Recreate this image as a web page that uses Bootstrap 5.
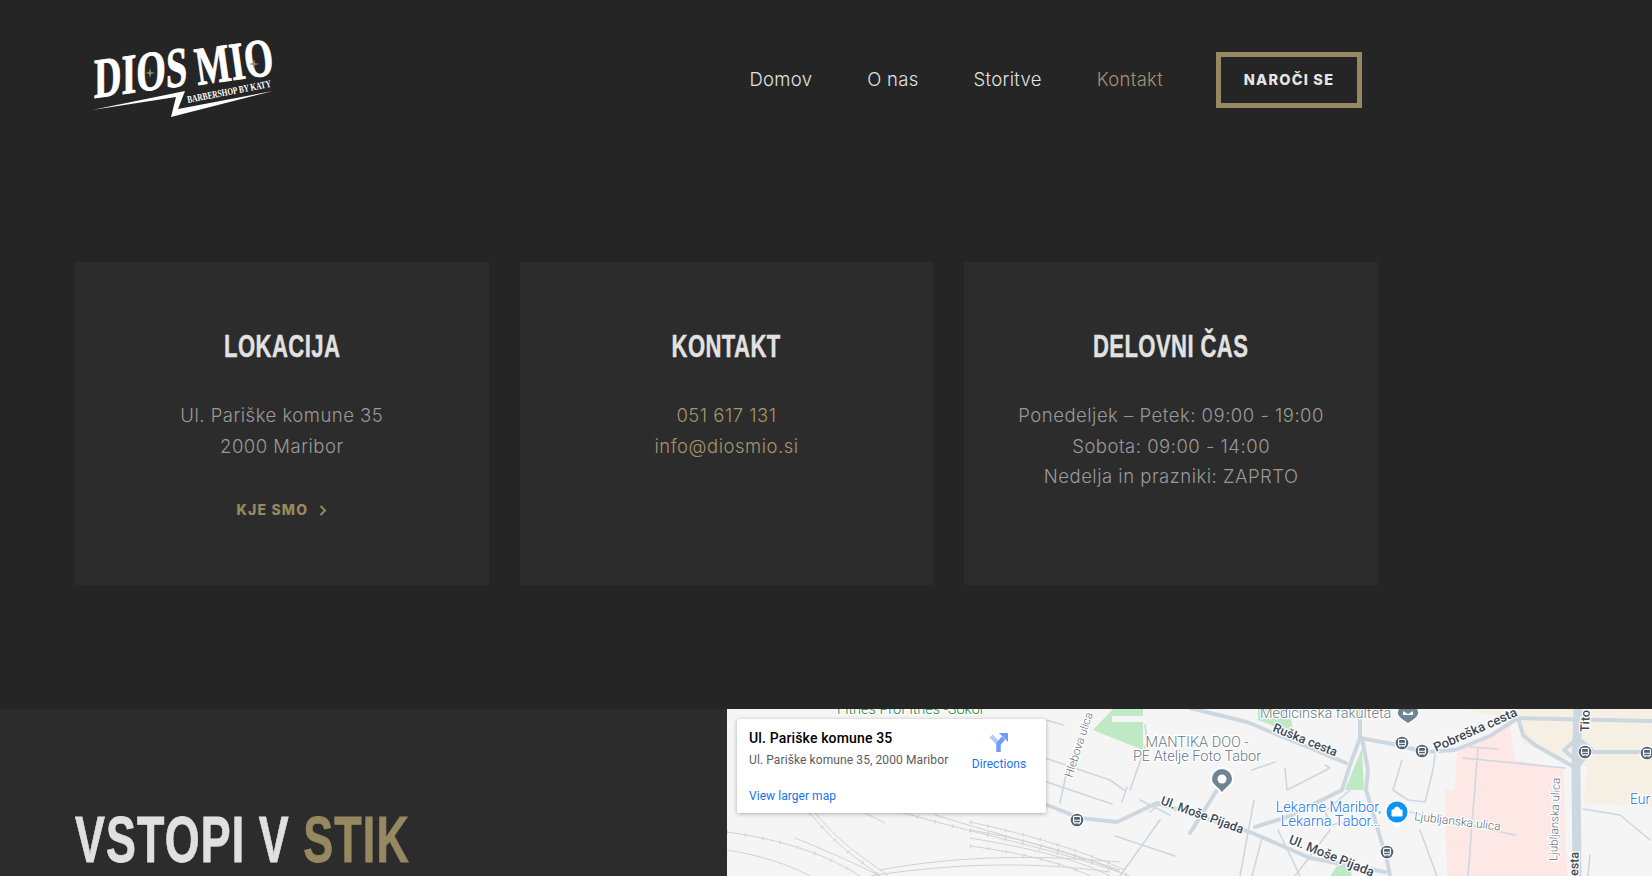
<!DOCTYPE html>
<html lang="en">
<head>
    <meta charset="UTF-8">
    <title>Diosmio Kontakt</title>
    <link href="https://cdn.jsdelivr.net/npm/bootstrap@5.3.0/dist/css/bootstrap.min.css" rel="stylesheet">
    <style>
        html, body { height: 876px; overflow: hidden; }
        body { background: #252525; font-family: "Inter", "Open Sans", sans-serif; font-weight: 300; }
        .top-bar { height: 160px; width: 1303px; margin-left: 75px; padding: 0 16px; }
        .logo-svg { display: block; width: 190px; height: 80px; overflow: visible; }
        .menu-link { color: #e2e2e2; font-size: 18.5px; letter-spacing: .3px; text-decoration: none; }
        .menu-link.active-link { color: #a3956a; }
        .menu-list { gap: 55px; margin-right: 53px; }
        .order-btn { width: 146px; height: 56px; border: 5px solid #968961; border-radius: 0; color: #e4e4e4; font-size: 14.5px; font-weight: 800; letter-spacing: 1.2px; padding: 0; }
        .cards-wrap { width: 1303px; margin: 102px 0 124px 75px; }
        .cards-wrap .row { --bs-gutter-x: 31px; }
        .info-box { height: 323px; background: #2c2c2c; padding-top: 66px; color: #999; font-size: 18.5px; line-height: 30.6px; letter-spacing: .5px; }
        .info-title { font-family: "Liberation Sans", sans-serif; font-weight: 700; font-size: 32px; line-height: 36px; color: #e2e2e2; letter-spacing: .6px; margin-bottom: 36px; -webkit-text-stroke: .4px #e2e2e2; }
        .narrow-text { display: inline-block; transform: scaleX(.69); }
        .gold-link { color: #a3956a; text-decoration: none; }
        .more-link { display: inline-flex; align-items: center; gap: 11px; margin-top: 39px; font-size: 14px; font-weight: 800; letter-spacing: 1.2px; line-height: 20px; color: #968961; }
        .join-strip { height: 167px; background: #2c2c2c; overflow: hidden; }
        .join-left { width: 727px; padding: 94px 0 0 75px; }
        .join-title { font-family: "Liberation Sans", sans-serif; font-weight: 700; font-size: 64px; line-height: 74px; letter-spacing: 1.6px; color: #e0e0e0; margin: 0; white-space: nowrap; transform: scaleX(.7); transform-origin: left center; -webkit-text-stroke: .8px #e0e0e0; }
        .join-title span { color: #968961; -webkit-text-stroke: .8px #968961; }
        .map-pane { width: 925px; height: 167px; background: #f5f5f5; overflow: hidden; }
        .map-svg { display: block; width: 925px; height: 167px; }
        .map-svg text { font-family: "Roboto", sans-serif; paint-order: stroke; stroke: #fff; stroke-width: 2.5px; stroke-linejoin: round; }
        .map-card { position: absolute; left: 10px; top: 10px; width: 309px; height: 94px; background: #fff; box-shadow: 0 1px 4px rgba(0,0,0,.3); border-radius: 2px; font-family: "Roboto", sans-serif; font-weight: 400; padding: 10px 12px; }
        .map-card-title { font-size: 14px; font-weight: 500; color: #000; line-height: 16px; margin-top: 1px; letter-spacing: .15px; }
        .map-card-addr { font-size: 12px; color: #5b5b5b; line-height: 16px; margin-top: 6px; letter-spacing: .1px; }
        .map-card-link { font-size: 12px; color: #1a73e8; line-height: 16px; text-decoration: none; letter-spacing: .05px; }
        .map-card-dir { position: absolute; left: 232px; top: 13px; width: 60px; text-align: center; }
        .map-card-dir svg { margin-bottom: 4px; }
        .map-card-big { position: absolute; left: 12px; top: 69px; }
    </style>
</head>
<body>
    <header class="top-bar d-flex align-items-center justify-content-between">
        <a href="#">
            <svg class="logo-svg" viewBox="91 40 190 80">
                <polygon fill="#fff" points="92,110 185,91 178,109 273,91 171,117 176,97"/>
                <g fill="#fff" stroke="#fff" stroke-width=".9" font-family="Liberation Serif, serif" font-weight="700">
                    <text x="0" y="0" font-size="56" textLength="94" lengthAdjust="spacingAndGlyphs" transform="translate(94 98) rotate(-8) skewX(-8)">DIOS</text>
                    <text x="0" y="0" font-size="54" textLength="78" lengthAdjust="spacingAndGlyphs" transform="translate(198 85) rotate(-8)">MIO</text>
                </g>
                <path d="M150 68l1 4 4 1-4 1-1 4-1-4-4-1 4-1zM254 59l1 4 4 1-4 1-1 4-1-4-4-1 4-1z" fill="#8a8a8a"/>
                <text x="0" y="0" fill="#fff" font-family="Liberation Serif, serif" font-size="10" font-weight="700" textLength="85" lengthAdjust="spacingAndGlyphs" transform="translate(188 103) rotate(-11)">BARBERSHOP BY KATY</text>
            </svg>
        </a>
        <div class="d-flex align-items-center">
            <nav class="nav menu-list">
                <a class="menu-link" href="#">Domov</a>
                <a class="menu-link" href="#">O nas</a>
                <a class="menu-link" href="#">Storitve</a>
                <a class="menu-link active-link" href="#">Kontakt</a>
            </nav>
            <button class="btn order-btn">NAROČI SE</button>
        </div>
    </header>

    <main class="cards-wrap">
        <div class="row">
            <div class="col-4">
                <div class="info-box text-center">
                    <h3 class="info-title"><span class="narrow-text">LOKACIJA</span></h3>
                    <div>Ul. Pariške komune 35</div>
                    <div>2000 Maribor</div>
                    <a class="gold-link more-link" href="#">KJE SMO
                        <svg width="8" height="11" viewBox="0 0 8 11"><path d="M1.500 1l4.500 4.500-4.500 4.500" fill="none" stroke="#968961" stroke-width="2"/></svg>
                    </a>
                </div>
            </div>
            <div class="col-4">
                <div class="info-box text-center">
                    <h3 class="info-title"><span class="narrow-text">KONTAKT</span></h3>
                    <div><a class="gold-link" href="#">051 617 131</a></div>
                    <div><a class="gold-link" href="#">info@diosmio.si</a></div>
                </div>
            </div>
            <div class="col-4">
                <div class="info-box text-center">
                    <h3 class="info-title"><span class="narrow-text">DELOVNI ČAS</span></h3>
                    <div>Ponedeljek – Petek: 09:00 - 19:00</div>
                    <div>Sobota: 09:00 - 14:00</div>
                    <div>Nedelja in prazniki: ZAPRTO</div>
                </div>
            </div>
        </div>
    </main>

    <section class="join-strip d-flex">
        <div class="join-left">
            <h2 class="join-title">VSTOPI V <span>STIK</span></h2>
        </div>
        <div class="map-pane position-relative">
            <svg class="map-svg" viewBox="727 709 925 167">
                <defs>
                    <g id="busPin">
                        <circle r="7.500" fill="#fff"/>
                        <circle r="6.300" fill="#4f6272"/>
                        <rect x="-3.500" y="-3.600" width="7" height="6.400" rx="1.200" fill="none" stroke="#fff" stroke-width="1.200"/>
                        <path d="M-3.400 .3h6.800M-2.200 3.200v1M2.200 3.200v1" stroke="#fff" stroke-width="1.100"/>
                    </g>
                </defs>
                <!-- land areas -->
                <polygon fill="#f6f0e4" points="1437,709 1652,709 1652,807 1583,803 1587,767 1563,757 1523,743 1518,720 1463,709"/>
                <polygon fill="#fde8e6" points="1510,725 1515,760 1563,768 1567,876 1447,876 1445,790 1455,790 1457,752"/>
                <polygon fill="#bfe8c5" points="1093,730 1113,709 1143,709 1143,750"/>
                <rect x="1112" y="716" width="31" height="6" fill="#f5f5f5"/>
                <polygon fill="#bfe8c5" points="1258,709 1290,709 1293,733 1258,720"/>
                <polygon fill="#bfe8c5" points="1362,748 1345,790 1364,790"/>
                <polygon fill="#bfe8c5" points="1330,876 1337,866 1350,866 1352,876"/>
                <!-- rail lines -->
                <g fill="none" stroke="#d2d2d2" stroke-width="1">
                    <path d="M810 813 C840 850 860 860 880 876"/>
                    <path d="M815 813 C845 848 865 858 888 876"/>
                    <path d="M727 832 C770 838 820 850 860 876"/>
                    <path d="M727 850 C760 855 790 865 810 876"/>
                    <path d="M795 838 C830 852 860 866 880 876"/>
                    <path d="M900 812 C980 835 1060 850 1130 876"/>
                    <path d="M935 815 C1000 835 1060 850 1120 870"/>
                    <path d="M970 822 C1030 835 1080 850 1125 870"/>
                    <path d="M970 830 C1030 840 1080 855 1120 872"/>
                    <path d="M970 838 C1030 848 1080 860 1110 876"/>
                    <path d="M970 846 C1030 854 1070 866 1090 876"/>
                    <path d="M880 870 C960 855 1040 855 1120 862"/>
                    <path d="M870 876 C960 862 1040 862 1110 872"/>
                    <path d="M865 813L885 823"/>
                </g>
                <g fill="none" stroke="#d2d2d2" stroke-width="4" stroke-dasharray="1 17">
                    <path d="M810 813 C840 850 860 860 880 876"/>
                    <path d="M727 832 C770 838 820 850 860 876"/>
                    <path d="M900 812 C980 835 1060 850 1130 876"/>
                    <path d="M970 822 C1030 835 1080 850 1125 870"/>
                    <path d="M970 830 C1030 840 1080 855 1120 872"/>
                    <path d="M970 846 C1030 854 1070 866 1090 876"/>
                </g>
                <!-- roads -->
                <g fill="none" stroke="#cdd7e0" stroke-linecap="round" stroke-linejoin="round">
                    <g stroke-width="1.600">
                        <path d="M1046 720L1063 725M1042 757L1110 780 1124 790M1047 782L1112 804M1127 787L1122 802M1067 770L1060 803M1145 725L1147 742 1130 790"/>
                        <path d="M1140 800L1170 815M1150 812L1168 797M1160 820L1120 876M1115 836L1175 856M1252 770L1275 762M1285 768L1287 790 1330 768 1325 765"/>
                        <path d="M1402 760L1393 790 1408 800 1425 802 1433 770 1435 755M1420 830L1437 876M1278 830L1300 876"/>
                        <path d="M1254 800L1240 876M1262 838L1252 876M1330 830L1295 876M1350 790L1325 812 1332 825 1356 818"/>
                        <path d="M1410 812L1515 835M1470 747L1498 749M1478 748L1468 876M1463 758L1565 768"/>
                        <path d="M1583 809L1620 815 1650 840M1590 855L1588 876"/>
                    </g>
                    <g stroke-width="4">
                        <path d="M1190 708L1247 722 1310 748 1346 763M1360 708V738L1350 765 1342 790 1290 816 1255 827M1362 738L1368 770 1366 790 1378 830 1387 860 1390 876"/>
                        <path d="M1360 738L1398 745 1425 752 1455 750 1490 736 1518 718 1652 721"/>
                        <path d="M1518 718L1523 735 1535 745 1576 768M1576 768L1590 752H1652M1564 750L1578 738 1592 750M1564 750L1576 760"/>
                        <path d="M1047 805L1080 818 1117 822 1157 803M1217 790L1190 833M1157 803L1185 812 1250 832 1310 858 1385 872"/>
                    </g>
                    <path stroke-width="9" d="M1578 709L1576 770 1577 876"/>
                </g>
                <!-- labels -->
                <text x="837" y="714" font-size="14.500" fill="#188038">Fitnes ProFitnes -Sokol</text>
                <text x="1260" y="718" font-size="14.500" fill="#687987">Medicinska fakulteta</text>
                <text text-anchor="middle" x="1197" y="747" font-size="14.500" fill="#687987">MANTIKA DOO -</text>
                <text text-anchor="middle" x="1197" y="761" font-size="14.500" fill="#687987">PE Atelje Foto Tabor</text>
                <text font-size="11.500" fill="#5f6d7a" transform="translate(1072 778) rotate(-72)">Hlebova ulica</text>
                <text font-size="12.500" font-weight="500" fill="#3c4a57" transform="translate(1272 731) rotate(22)">Ruška cesta</text>
                <text font-size="13" font-weight="500" fill="#3c4a57" transform="translate(1436 752) rotate(-24)">Pobreška cesta</text>
                <text font-size="12.500" font-weight="500" fill="#3c4a57" transform="translate(1160 804) rotate(20)">Ul. Moše Pijada</text>
                <text font-size="13" font-weight="500" fill="#3c4a57" transform="translate(1288 843) rotate(22)">Ul. Moše Pijada</text>
                <text font-size="12" fill="#5f6d7a" transform="translate(1414 820) rotate(7)">Ljubljanska ulica</text>
                <text font-size="11.500" fill="#5f6d7a" transform="translate(1557 861) rotate(-88)">Ljubljanska ulica</text>
                <text font-size="12.500" font-weight="500" fill="#3c4a57" transform="translate(1589 732) rotate(-88)">Tito</text>
                <text font-size="12.500" font-weight="500" fill="#3c4a57" transform="translate(1578 876) rotate(-88)">esta</text>
                <text x="1630" y="804" font-size="14" fill="#1a73e8">Eur</text>
                <text text-anchor="end" x="1381" y="812" font-size="14.500" fill="#1a73e8">Lekarne Maribor,</text>
                <text text-anchor="end" x="1381" y="826" font-size="14.500" fill="#1a73e8">Lekarna Tabor...</text>
                <!-- pins -->
                <path d="M1222 767a12 12 0 0 1 12 12c0 6-8 10-12 16-4-6-12-10-12-16a12 12 0 0 1 12-12z" fill="#fff"/>
                <path d="M1222 769a10 10 0 0 1 10 10c0 5-6 8-10 13-4-5-10-8-10-13a10 10 0 0 1 10-10z" fill="#6f8594"/>
                <circle cx="1222" cy="779" r="4.500" fill="#fff"/>
                <path d="M1397 801a12 12 0 0 1 12 12c0 6-8 10-12 15-4-5-12-9-12-15a12 12 0 0 1 12-12z" fill="#fff"/>
                <circle cx="1397" cy="812" r="10.500" fill="#0b93f6"/>
                <path d="M1392 810h10v6h-10zM1394.500 810a2.500 3 0 0 1 5 0" fill="#fff" stroke="#fff"/>
                <path d="M1408 703a11 11 0 0 1 11 10c0 5-7 8-11 11-4-3-11-6-11-11a11 11 0 0 1 11-10z" fill="#6f8594" stroke="#fff" stroke-width="1.500"/>
                <path d="M1403 711l5 3 5-3v4h-10z" fill="#fff"/>
                <use href="#busPin" x="1402" y="743"/>
                <use href="#busPin" x="1422" y="751"/>
                <use href="#busPin" x="1387" y="852"/>
                <use href="#busPin" x="1585" y="752"/>
                <use href="#busPin" x="1647" y="753"/>
                <use href="#busPin" x="1077" y="820"/>
            </svg>
            <div class="map-card">
                <div class="map-card-title">Ul. Pariške komune 35</div>
                <div class="map-card-addr">Ul. Pariške komune 35, 2000 Maribor</div>
                <a class="map-card-link map-card-dir" href="#">
                    <svg class="d-block mx-auto" width="20" height="20" viewBox="0 0 20 20">
                        <path d="M2 4l7 7" stroke="#b6cbfb" stroke-width="4.500" fill="none"/>
                        <path d="M9.500 20v-8l5-6" stroke="#6f9cf8" stroke-width="4.500" fill="none"/>
                        <path d="M10 1h9v9z" fill="#6f9cf8"/>
                    </svg>
                    Directions
                </a>
                <a class="map-card-link map-card-big" href="#">View larger map</a>
            </div>
        </div>
    </section>
</body>
</html>
